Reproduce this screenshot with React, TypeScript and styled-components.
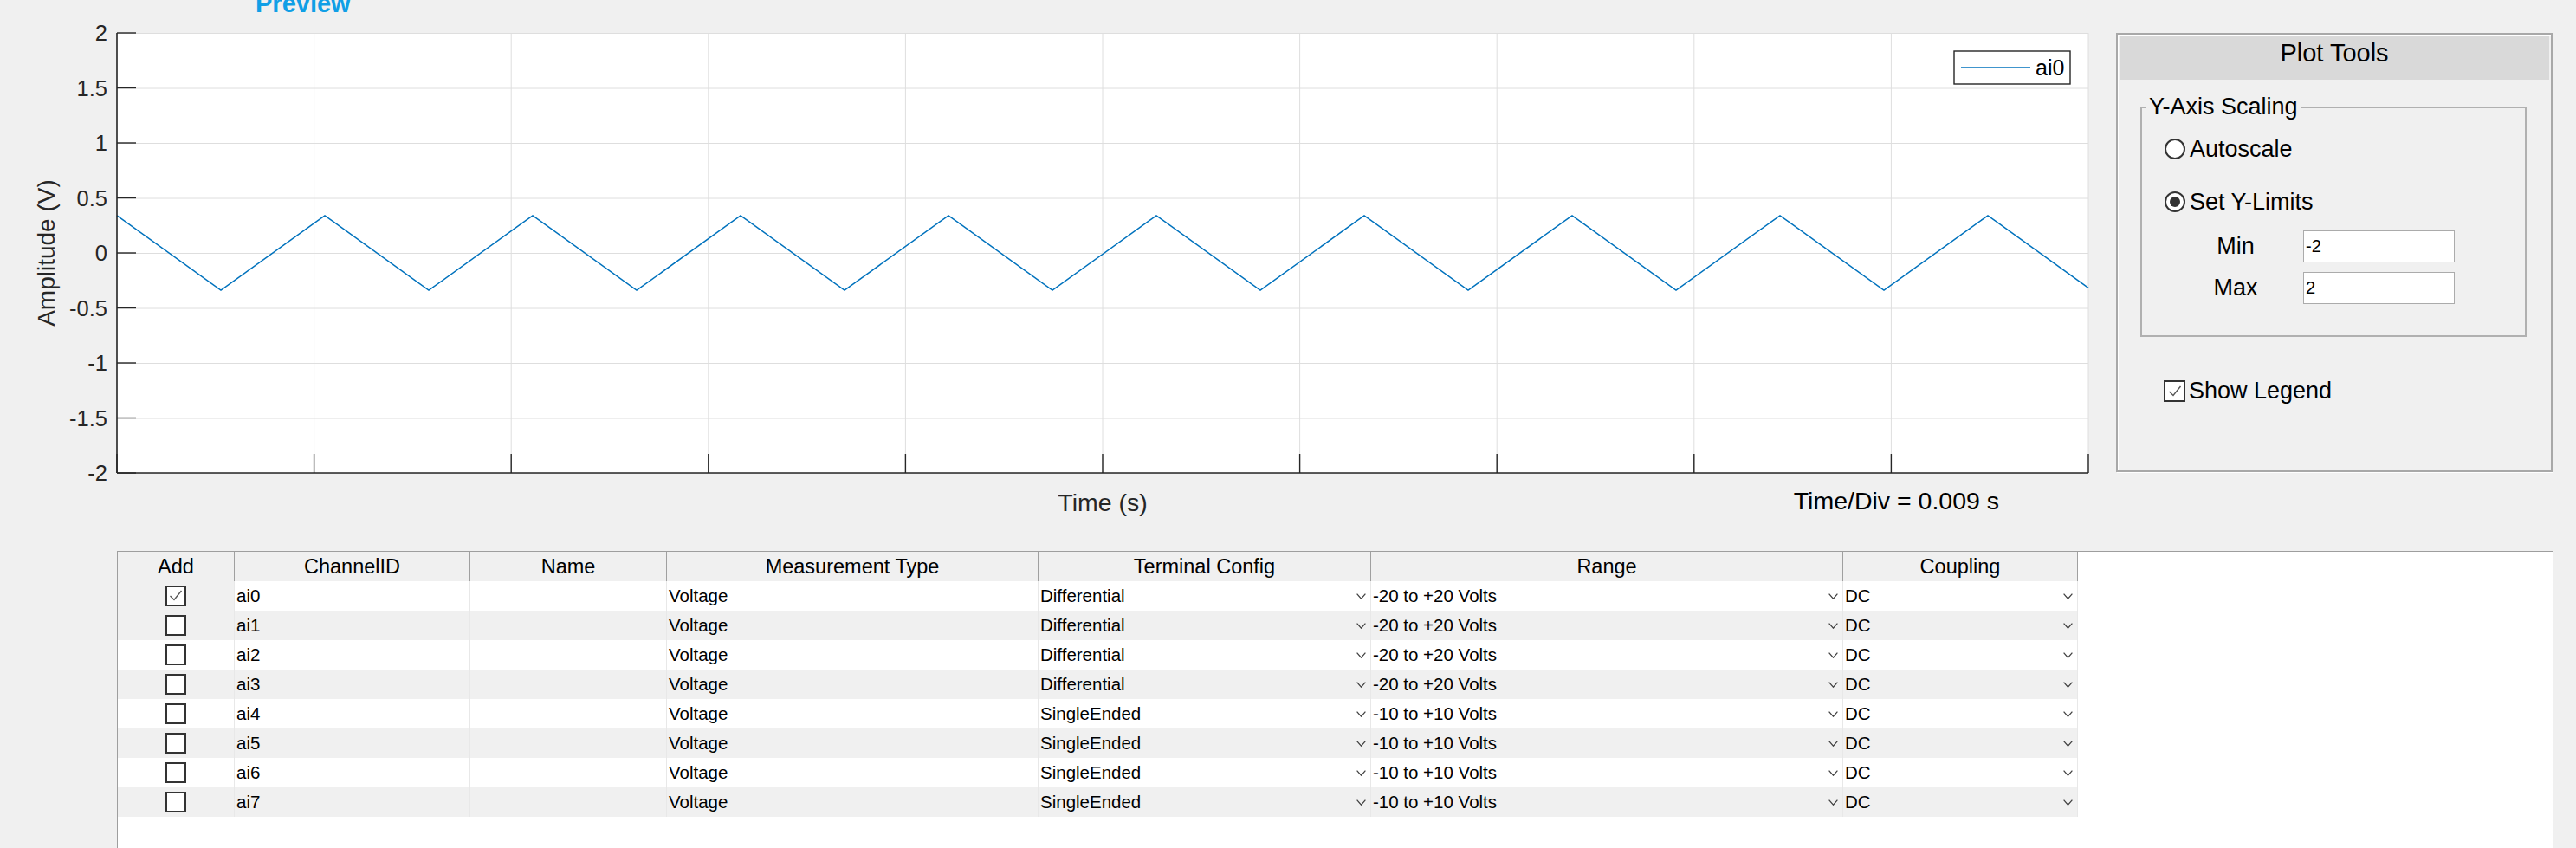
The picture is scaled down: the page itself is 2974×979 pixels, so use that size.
import React from 'react'
import styled, { createGlobalStyle } from 'styled-components'

const GlobalStyle = createGlobalStyle`
  html, body {
    margin: 0;
    padding: 0;
    background: #f0f0f0;
    overflow: hidden;
  }
  body {
    font-family: 'Liberation Sans', Arial, sans-serif;
    color: #000;
  }
`

// axes geometry (svg coords, svg starts at page x=0 / y=38)
const X0 = 135
const X1 = 2411
const AXES_H = 508
const AMP = 0.34
const Y_TICKS = [2, 1.5, 1, 0.5, 0, -0.5, -1, -1.5, -2]

const yOf = (v: number) => (2 - v) * (AXES_H / 4)

const buildWave = () => {
  const pts: string[] = []
  const valueAt = (x: number) => {
    const phase = (x - X0) / 240
    const frac = phase - Math.floor(phase)
    return frac < 0.5 ? AMP - 4 * AMP * frac : -AMP + 4 * AMP * (frac - 0.5)
  }
  for (let x = X0; x < X1; x += 120) {
    pts.push(`${x},${yOf(valueAt(x)).toFixed(1)}`)
  }
  pts.push(`${X1},${yOf(valueAt(X1)).toFixed(1)}`)
  return pts.join(' ')
}

const COL_WIDTHS = [135, 272, 227, 429, 384, 545, 271]
const HEADERS = ['Add', 'ChannelID', 'Name', 'Measurement Type', 'Terminal Config', 'Range', 'Coupling']

const channels = Array.from({ length: 8 }, (_, i) => ({
  id: `ai${i}`,
  checked: i === 0,
  measurement: 'Voltage',
  terminal: i < 4 ? 'Differential' : 'SingleEnded',
  range: i < 4 ? '-20 to +20 Volts' : '-10 to +10 Volts',
  coupling: 'DC',
}))

const Chart: React.FC = () => {
  const gridXs = Array.from({ length: 11 }, (_, i) => X0 + (i * (X1 - X0)) / 10)

  return (
    <ChartSvg width={X1} height={AXES_H} viewBox={`0 0 ${X1} ${AXES_H}`}>
      <rect x={X0} y={0} width={X1 - X0} height={AXES_H} fill="#fff" />
      {Y_TICKS.map((v) => (
        <line key={`gy${v}`} x1={X0} x2={X1} y1={yOf(v) + 0.5} y2={yOf(v) + 0.5} stroke="#dedede" strokeWidth={1} />
      ))}
      {gridXs.map((x) => (
        <line key={`gx${x}`} x1={x} x2={x} y1={0} y2={AXES_H} stroke="#dedede" strokeWidth={1} />
      ))}
      <polyline points={buildWave()} fill="none" stroke="#0072bd" strokeWidth={1.5} />
      <line x1={X0} x2={X0} y1={0} y2={AXES_H} stroke="#262626" strokeWidth={1.6} />
      <line x1={X0} x2={X1} y1={AXES_H} y2={AXES_H} stroke="#262626" strokeWidth={1.6} />
      {Y_TICKS.map((v) => (
        <line key={`ty${v}`} x1={X0} x2={X0 + 22} y1={yOf(v)} y2={yOf(v)} stroke="#262626" strokeWidth={1.4} />
      ))}
      {gridXs.map((x) => (
        <line key={`tx${x}`} x1={x} x2={x} y1={AXES_H} y2={AXES_H - 22} stroke="#262626" strokeWidth={1.4} />
      ))}
      {Y_TICKS.map((v) => (
        <TickLabel key={`l${v}`} x={124} y={yOf(v) + 9} textAnchor="end">
          {v}
        </TickLabel>
      ))}
      <AxisTitle transform={`translate(63, ${AXES_H / 2}) rotate(-90)`} textAnchor="middle">
        Amplitude (V)
      </AxisTitle>
      <rect x={2256} y={21} width={134} height={38} fill="#fff" stroke="#262626" strokeWidth={1.4} />
      <line x1={2264} x2={2344} y1={40} y2={40} stroke="#0072bd" strokeWidth={1.5} />
      <LegendText x={2350} y={49}>
        ai0
      </LegendText>
    </ChartSvg>
  )
}

const Chevron: React.FC = () => (
  <ChevronSvg width={11} height={7} viewBox="0 0 11 7">
    <polyline points="0.6,0.6 5.5,6.2 10.4,0.6" fill="none" stroke="#404040" strokeWidth={1.25} />
  </ChevronSvg>
)

const Tick: React.FC = () => (
  <svg width={20} height={20} viewBox="0 0 20 20">
    <polyline points="3.5,10 8,14.5 16.5,4" fill="none" stroke="#555" strokeWidth={1.4} />
  </svg>
)

const App: React.FC = () => {
  return (
    <Page>
      <GlobalStyle />
      <TopRow>
        <PlotColumn>
          <TitleRow>
            <Title>Preview</Title>
          </TitleRow>
          <Chart />
          <AxisFooter>
            <XLabel>Time (s)</XLabel>
            <TimeDiv>Time/Div = 0.009 s</TimeDiv>
          </AxisFooter>
        </PlotColumn>

        <ToolsPanel>
          <PanelHeader>Plot Tools</PanelHeader>
          <ScaleGroup>
            <GroupLegend>Y-Axis Scaling</GroupLegend>
            <RadioRow>
              <Radio $selected={false} />
              <OptionText>Autoscale</OptionText>
            </RadioRow>
            <RadioRow $gap>
              <Radio $selected />
              <OptionText>Set Y-Limits</OptionText>
            </RadioRow>
            <LimitGrid>
              <LimitLabel>Min</LimitLabel>
              <LimitInput>-2</LimitInput>
              <LimitLabel>Max</LimitLabel>
              <LimitInput>2</LimitInput>
            </LimitGrid>
          </ScaleGroup>
          <LegendToggle>
            <ToolCheck>
              <Tick />
            </ToolCheck>
            <OptionText>Show Legend</OptionText>
          </LegendToggle>
        </ToolsPanel>
      </TopRow>

      <TableFrame>
        <TableGrid>
          {HEADERS.map((h) => (
            <HeadCell key={h}>{h}</HeadCell>
          ))}
          {channels.map((ch, i) => {
            const shaded = i % 2 === 1
            return (
              <React.Fragment key={ch.id}>
                <AddCell $shaded={shaded || i === 0}>
                  <RowCheck>{ch.checked && <Tick />}</RowCheck>
                </AddCell>
                <Cell $shaded={shaded}>{ch.id}</Cell>
                <Cell $shaded={shaded} />
                <Cell $shaded={shaded}>{ch.measurement}</Cell>
                <Cell $shaded={shaded}>
                  {ch.terminal}
                  <Chevron />
                </Cell>
                <Cell $shaded={shaded}>
                  {ch.range}
                  <Chevron />
                </Cell>
                <Cell $shaded={shaded}>
                  {ch.coupling}
                  <Chevron />
                </Cell>
              </React.Fragment>
            )
          })}
        </TableGrid>
      </TableFrame>
    </Page>
  )
}

const Page = styled.div`
  width: 2974px;
  height: 979px;
  display: flex;
  flex-direction: column;
  background: #f0f0f0;
  overflow: hidden;
`

const TopRow = styled.div`
  display: flex;
  align-items: flex-start;
  height: 636px;
  flex-shrink: 0;
`

const PlotColumn = styled.div`
  width: 2411px;
  display: flex;
  flex-direction: column;
`

const TitleRow = styled.div`
  height: 38px;
  display: flex;
  align-items: flex-start;
  padding-left: 295px;
`

const Title = styled.div`
  margin-top: -10px;
  font-size: 29px;
  line-height: 29px;
  font-weight: 700;
  color: #109fe6;
`

const ChartSvg = styled.svg`
  display: block;
  overflow: visible;
  font-family: 'Liberation Sans', Arial, sans-serif;
`

const TickLabel = styled.text`
  font-size: 25.5px;
  fill: #262626;
`

const AxisTitle = styled.text`
  font-size: 28px;
  fill: #262626;
`

const LegendText = styled.text`
  font-size: 25px;
  fill: #000;
`

const AxisFooter = styled.div`
  display: grid;
  grid-template-columns: 1fr auto 1fr;
  align-items: start;
  margin-left: 135px;
  width: 2276px;
  margin-top: 20px;
`

const XLabel = styled.div`
  grid-column: 2;
  font-size: 28.5px;
  line-height: 28px;
  color: #262626;
`

const TimeDiv = styled.div`
  grid-column: 3;
  justify-self: start;
  margin-left: 746px;
  margin-top: -2px;
  font-size: 28.5px;
  line-height: 28px;
  color: #000;
`

const ToolsPanel = styled.div`
  box-sizing: border-box;
  width: 504px;
  height: 507px;
  margin-top: 38px;
  margin-left: 32px;
  padding: 2px;
  border: 2px solid #a8a8a8;
  box-shadow: inset 1px 1px 0 #fff, 1px 1px 0 #fff;
  display: flex;
  flex-direction: column;
`

const PanelHeader = styled.div`
  height: 50px;
  box-sizing: border-box;
  padding-top: 5px;
  background: #d9d9d9;
  text-align: center;
  font-size: 29px;
  line-height: 29px;
  color: #000;
`

const ScaleGroup = styled.fieldset`
  box-sizing: border-box;
  width: 446px;
  margin: 18px 0 0 24px;
  padding: 18px 0 36px 0;
  border: 2px solid #b0b0b0;
  min-width: 0;
`

const GroupLegend = styled.legend`
  margin-left: 5px;
  padding: 0 3px;
  font-size: 27px;
  line-height: 27px;
  color: #000;
`

const RadioRow = styled.div<{ $gap?: boolean }>`
  display: flex;
  align-items: center;
  gap: 5px;
  height: 34px;
  margin-left: 26px;
  margin-top: ${({ $gap }) => ($gap ? '27px' : '0')};
`

const Radio = styled.span<{ $selected: boolean }>`
  box-sizing: border-box;
  width: 24px;
  height: 24px;
  border-radius: 50%;
  border: 2px solid #333;
  background: #fff;
  display: flex;
  align-items: center;
  justify-content: center;

  &::after {
    content: '';
    width: 12px;
    height: 12px;
    border-radius: 50%;
    background: ${({ $selected }) => ($selected ? '#333' : 'transparent')};
  }
`

const OptionText = styled.span`
  font-size: 27px;
  line-height: 27px;
  color: #000;
`

const LimitGrid = styled.div`
  display: grid;
  grid-template-columns: 100px 175px;
  column-gap: 28px;
  row-gap: 11px;
  margin-top: 16px;
  margin-left: 58px;
`

const LimitLabel = styled.div`
  font-size: 27px;
  line-height: 37px;
  text-align: center;
  color: #000;
`

const LimitInput = styled.div`
  box-sizing: border-box;
  height: 37px;
  padding-left: 2px;
  background: #fff;
  border: 1px solid #ababab;
  font-size: 20px;
  line-height: 35px;
  color: #000;
`

const LegendToggle = styled.div`
  display: flex;
  align-items: center;
  gap: 4px;
  margin-top: 50px;
  margin-left: 51px;
  height: 25px;
`

const ToolCheck = styled.span`
  box-sizing: border-box;
  width: 25px;
  height: 25px;
  border: 2px solid #333;
  background: #fff;
  display: flex;
  align-items: center;
  justify-content: center;
`

const TableFrame = styled.div`
  box-sizing: border-box;
  margin-left: 135px;
  width: 2813px;
  height: 343px;
  flex-shrink: 0;
  border: 1px solid #9e9e9e;
  border-bottom: none;
  background: #fff;
`

const TableGrid = styled.div`
  display: grid;
  grid-template-columns: ${COL_WIDTHS.map((w) => `${w}px`).join(' ')};
  grid-auto-rows: 34px;
  width: max-content;
`

const HeadCell = styled.div`
  box-sizing: border-box;
  height: 35px;
  background: #f0f0f0;
  border-right: 1px solid #a0a0a0;
  border-bottom: 1px solid #a0a0a0;
  text-align: center;
  font-size: 23.5px;
  line-height: 34px;
  color: #000;
`

const Cell = styled.div<{ $shaded: boolean }>`
  box-sizing: border-box;
  display: flex;
  align-items: center;
  justify-content: space-between;
  padding-left: 2px;
  padding-right: 5px;
  background: ${({ $shaded }) => ($shaded ? '#f0f0f0' : '#fff')};
  border-right: 1px solid #e8e8e8;
  font-size: 20.5px;
  color: #000;
  white-space: nowrap;
`

const AddCell = styled(Cell)`
  justify-content: center;
  padding: 0;
`

const RowCheck = styled.span`
  box-sizing: border-box;
  width: 24px;
  height: 24px;
  border: 2px solid #333;
  background: #fff;
  display: flex;
  align-items: center;
  justify-content: center;
`

const ChevronSvg = styled.svg`
  display: block;
  flex-shrink: 0;
`

export default App
